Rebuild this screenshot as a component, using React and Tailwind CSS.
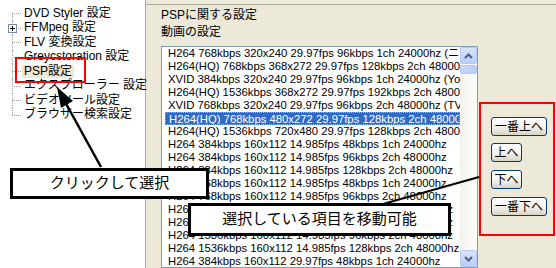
import React from 'react';

const treeItems = [
  { label: 'DVD Styler 設定' },
  { label: 'FFMpeg 設定', expandable: true },
  { label: 'FLV 変換設定' },
  { label: 'Greycstoration 設定' },
  { label: 'PSP設定', selected: true },
  { label: 'エクスプローラー 設定' },
  { label: 'ビデオツール設定' },
  { label: 'ブラウザー検索設定' },
];

const presets = [
  'H264 768kbps 320x240 29.97fps 96kbps 1ch 24000hz (ニコニコ動画)',
  'H264(HQ) 768kbps 368x272 29.97fps 128kbps 2ch 48000hz',
  'XVID 384kbps 320x240 29.97fps 96kbps 1ch 24000hz (YouTube)',
  'H264(HQ) 1536kbps 368x272 29.97fps 192kbps 2ch 48000hz',
  'XVID 768kbps 320x240 29.97fps 96kbps 2ch 48000hz (TV出力)',
  'H264(HQ) 768kbps 480x272 29.97fps 128kbps 2ch 48000hz',
  'H264(HQ) 1536kbps 720x480 29.97fps 128kbps 2ch 48000hz',
  'H264 384kbps 160x112 14.985fps 48kbps 1ch 24000hz',
  'H264 384kbps 160x112 14.985fps 96kbps 2ch 48000hz',
  'H264 384kbps 160x112 14.985fps 128kbps 2ch 48000hz',
  'H264 768kbps 160x112 14.985fps 48kbps 1ch 24000hz',
  'H264 768kbps 160x112 14.985fps 96kbps 2ch 48000hz',
  'H264 768kbps 160x112 14.985fps 128kbps 2ch 48000hz',
  'H264 1536kbps 160x112 14.985fps 48kbps 1ch 24000hz',
  'H264 1536kbps 160x112 14.985fps 96kbps 2ch 48000hz',
  'H264 1536kbps 160x112 14.985fps 128kbps 2ch 48000hz',
  'H264 384kbps 160x112 29.97fps 48kbps 1ch 24000hz',
];

const SELECTED = 5;

const TreeRow = ({ item, index, last }) => (
  <div className="flex h-[14.5px] items-center">
    <div className="relative h-full w-[22px] shrink-0">
      {/* connector lines */}
      <div
        className={`absolute left-[12px] border-l border-dotted border-[#a0a0a0] ${
          index === 0 ? 'top-1/2 bottom-0' : last ? 'top-0 h-1/2' : 'top-0 bottom-0'
        }`}
      />
      <div className="absolute left-[12px] top-1/2 w-[9px] border-t border-dotted border-[#a0a0a0]" />
      {item.expandable && (
        <div className="absolute left-[8px] top-[3px] flex h-[9px] w-[9px] items-center justify-center border border-[#7b8ea6] bg-white">
          <svg width="7" height="7" viewBox="0 0 7 7">
            <path d="M1 3.5h5M3.5 1v5" stroke="#000" strokeWidth="1" />
          </svg>
        </div>
      )}
    </div>
    <span
      className={`px-[2px] text-[12px] leading-[13px] whitespace-nowrap text-black ${
        item.selected ? 'bg-[#ece9d8]' : ''
      }`}
    >
      {item.label}
    </span>
  </div>
);

const XpButton = ({ children, wide }) => (
  <button
    className={`flex h-[19px] items-center justify-center rounded-[3px] border border-[#003c74] bg-gradient-to-b from-white via-[#f4f3ee] to-[#d8d4c6] text-[12px] leading-none text-black ${
      wide ? 'w-[56px]' : 'w-[31px]'
    }`}
  >
    {children}
  </button>
);

const ScrollButton = ({ up }) => (
  <div className="flex h-[17px] w-[17px] items-center justify-center rounded-[2px] border border-[#b4c8f6] bg-gradient-to-b from-[#d8e4fe] to-[#b9cdfb]">
    <svg width="9" height="6" viewBox="0 0 9 6">
      <path
        d={up ? 'M1 5L4.5 1.5L8 5' : 'M1 1L4.5 4.5L8 1'}
        fill="none"
        stroke="#4d6185"
        strokeWidth="2"
      />
    </svg>
  </div>
);

export default function App() {
  return (
    <div className="relative flex h-[268px] w-[556px] overflow-hidden bg-[#ece9d8] font-['Liberation_Sans','Noto_Sans_CJK_JP',sans-serif]">
      {/* settings tree */}
      <div className="h-full w-[146px] shrink-0 border-r border-[#aca899] bg-white pt-[6px]">
        {treeItems.map((item, i) => (
          <TreeRow key={item.label} item={item} index={i} last={i === treeItems.length - 1} />
        ))}
      </div>

      {/* settings page */}
      <div className="flex min-w-0 flex-1 flex-col">
        <div className="mt-[4px] h-[2px] border-t border-[#aca899] bg-white" />
        <div className="pl-[15px]">
          <p className="mt-[3px] text-[12px] leading-[14px] text-black">PSPに関する設定</p>
          <p className="mt-[3px] text-[12px] leading-[14px] text-black">動画の設定</p>

          <div className="mt-[7px] flex items-start gap-[13px]">
            <div className="flex h-[222px] w-[317px] shrink-0 border border-[#7f9db9] bg-white">
              <div className="min-w-0 flex-1 overflow-hidden pl-[3px]">
                {presets.map((p, i) => (
                  <div
                    key={i}
                    className={`h-[13px] overflow-hidden whitespace-nowrap pl-[3px] text-[11.3px] leading-[13px] ${
                      i === SELECTED
                        ? 'border border-dotted border-[#e8b04c] bg-[#316ac5] pl-[2px] leading-[11px] text-white'
                        : 'text-black'
                    }`}
                  >
                    {p}
                  </div>
                ))}
              </div>
              <div className="flex w-[17px] shrink-0 flex-col bg-gradient-to-r from-[#f3f2ee] to-[#fdfdfb]">
                <ScrollButton up />
                <div className="mt-[1px] h-[9px] w-[17px] rounded-[2px] border border-[#b4c8f6] bg-gradient-to-r from-[#c9d8fc] to-[#b9cdfb]" />
                <div className="flex-1" />
                <ScrollButton />
              </div>
            </div>

            <div className="flex flex-col items-start pt-[71px]">
              <XpButton wide>一番上へ</XpButton>
              <div className="mt-[7px]">
                <XpButton>上へ</XpButton>
              </div>
              <div className="mt-[8px]">
                <XpButton>下へ</XpButton>
              </div>
              <div className="mt-[8px]">
                <XpButton wide>一番下へ</XpButton>
              </div>
            </div>
          </div>
        </div>
      </div>

      {/* annotations */}
      <div className="pointer-events-none absolute left-[15px] top-[57px] h-[26px] w-[71px] border-[2px] border-[#ff0000]" />
      <div className="pointer-events-none absolute left-[479px] top-[102px] h-[134px] w-[76px] border-[2px] border-[#ff0000]" />

      <svg className="pointer-events-none absolute left-0 top-0" width="556" height="268" viewBox="0 0 556 268">
        <line x1="101" y1="167" x2="64" y2="100" stroke="#000" strokeWidth="2.5" />
        <polygon points="57,87 73,101 61,108" fill="#000" />
        <line x1="383" y1="204" x2="479" y2="177" stroke="#000" strokeWidth="2" />
      </svg>

      <div className="absolute left-[10px] top-[168px] flex h-[31px] w-[199px] items-center justify-center border-[3px] border-black bg-white text-[15px] text-black">
        クリックして選択
      </div>
      <div className="absolute left-[188px] top-[203px] flex h-[33px] w-[263px] items-center justify-center border-[3px] border-black bg-white text-[15px] text-black">
        選択している項目を移動可能
      </div>
    </div>
  );
}
